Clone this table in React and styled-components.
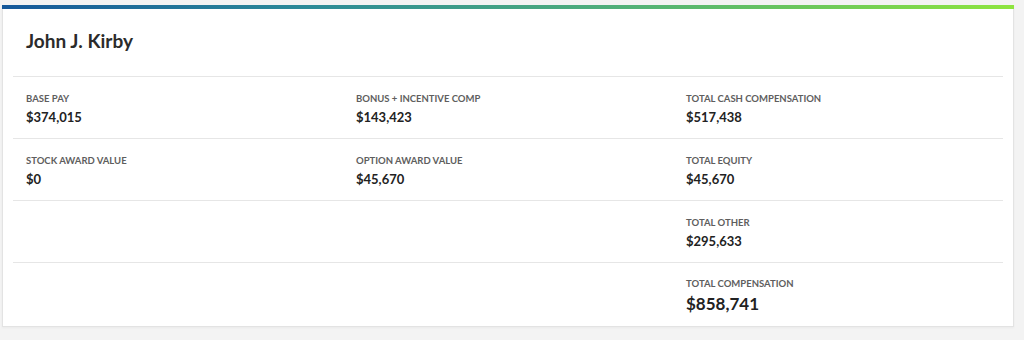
import React from "react";
import styled, { createGlobalStyle } from "styled-components";

const Global = createGlobalStyle`
  html, body { margin: 0; padding: 0; background: #f3f3f3; }
  body { font-family: Lato, "Liberation Sans", sans-serif; color: #222; }
`;

const Page = styled.div`
  padding: 5px 10px 13px 2px;
`;

const Card = styled.section`
  position: relative;
  background: #fff;
  border: 1px solid #e3e3e3;
  border-top: none;
  box-shadow: 0 1px 2px rgba(0, 0, 0, 0.04);
  padding: 4px 10px 0;
  &::before {
    content: "";
    position: absolute;
    left: -1px;
    right: -1px;
    top: 0;
    height: 4px;
    background: linear-gradient(90deg, #15589a 0%, #2c8a98 30%, #4fae7a 60%, #6cc85a 80%, #8ee53f 100%);
  }
`;

const Header = styled.header`
  padding: 20px 13px 23px;
  border-bottom: 1px solid #e6e6e6;
`;

const Name = styled.h1`
  margin: 0;
  font-size: 19px;
  line-height: 24px;
  font-weight: 700;
  color: #2b2b2b;
`;

const Row = styled.div`
  display: grid;
  grid-template-columns: repeat(3, 1fr);
  border-bottom: ${(p) => (p.$last ? "none" : "1px solid #e6e6e6")};
  padding: ${(p) => (p.$last ? "15px 0 12px" : "16px 0 13px")};
`;

const Cell = styled.div`
  padding-left: 13px;
  display: flex;
  flex-direction: column;
  gap: 4px;
`;

const Label = styled.div`
  font-size: 9.5px;
  line-height: 12px;
  font-weight: 700;
  text-transform: uppercase;
  color: #5e5e5e;
`;

const Value = styled.div`
  font-size: ${(p) => (p.$big ? "17px" : "13px")};
  line-height: ${(p) => (p.$big ? "20px" : "16px")};
  font-weight: 700;
  color: #222;
`;

const rows = [
  [
    ["Base Pay", "$374,015"],
    ["Bonus + Incentive Comp", "$143,423"],
    ["Total Cash Compensation", "$517,438"],
  ],
  [
    ["Stock Award Value", "$0"],
    ["Option Award Value", "$45,670"],
    ["Total Equity", "$45,670"],
  ],
  [null, null, ["Total Other", "$295,633"]],
  [null, null, ["Total Compensation", "$858,741", true]],
];

export default function App() {
  return (
    <Page>
      <Global />
      <Card>
        <Header>
          <Name>John J. Kirby</Name>
        </Header>
        {rows.map((r, i) => (
          <Row key={i} $last={i === rows.length - 1}>
            {r.map((c, j) => (
              <Cell key={j}>
                {c && (
                  <>
                    <Label>{c[0]}</Label>
                    <Value $big={c[2]}>{c[1]}</Value>
                  </>
                )}
              </Cell>
            ))}
          </Row>
        ))}
      </Card>
    </Page>
  );
}
